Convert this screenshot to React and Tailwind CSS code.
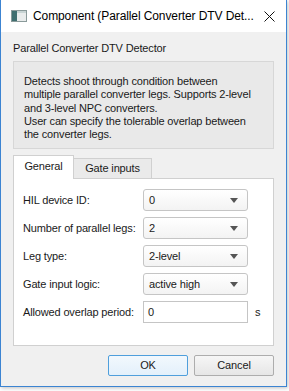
import React from 'react'

const Combo = ({value}) => (
    <div className="w-[105px] h-[22px] border border-[#c5c5c5] rounded-[3px] bg-gradient-to-b from-white to-[#f3f3f3] flex items-center justify-between pl-[5px] pr-[9px]">
        <span>{value}</span>
        <svg width="8" height="5" viewBox="0 0 8 5"><path d="M0 0h8L4 5z" fill="#555" /></svg>
    </div>
)

const Row = ({label, children}) => (
    <div className="flex items-center h-[22px]">
        <div className="w-[120px]">{label}</div>
        {children}
    </div>
)

const App = () => {
    return (
        <div className="w-[289px] h-[391px] bg-white whitespace-nowrap" style={{fontFamily: '"Liberation Sans", Arial, sans-serif'}}>
            <div className="w-[287px] h-[387px] border border-t-0 border-[#3c84d2] shadow-[1px_1px_4px_rgba(0,0,0,0.25)] flex flex-col text-[11px] tracking-[-0.15px] text-[#1a1a1a] leading-[13px]">
                <div className="h-[32px] bg-white flex items-center pl-[10px] pr-[11px] shrink-0">
                    <svg width="16" height="12" viewBox="0 0 16 12">
                        <rect x="0.5" y="0.5" width="15" height="11" fill="#e9ecec" stroke="#8a9a9a" />
                        <rect x="1" y="1" width="5" height="10" fill="#3f6f70" />
                        <rect x="6" y="1" width="9" height="2" fill="#c8d4d4" />
                    </svg>
                    <span className="ml-[6px] text-[12px] tracking-[-0.1px] text-black flex-1">Component (Parallel Converter DTV Det...</span>
                    <svg width="11" height="11" viewBox="0 0 11 11"><path d="M0.5 0.5l10 10M10.5 0.5l-10 10" stroke="#111" strokeWidth="1" /></svg>
                </div>
                <div className="flex-1 bg-[#f0f0f0] px-[12px] flex flex-col">
                    <div className="mt-[10px]">Parallel Converter DTV Detector</div>
                    <div className="mt-[6px] h-[88px] bg-[#e9e9e9] border border-[#d7d7d7] pl-[10px] pt-[13px] leading-[13.3px]">
                        Detects shoot through condition between<br />
                        multiple parallel converter legs. Supports 2-level<br />
                        and 3-level NPC converters.<br />
                        User can specify the tolerable overlap between<br />
                        the converter legs.
                    </div>
                    <div className="mt-[6px] flex items-end h-[24px] relative z-10">
                        <div className="w-[61px] h-[24px] bg-white border border-b-0 border-[#d0d0d0] flex items-center justify-center pb-[2px]">General</div>
                        <div className="w-[78px] h-[21px] bg-[#eaeaea] border border-l-0 border-[#d0d0d0] flex items-center justify-center">Gate inputs</div>
                    </div>
                    <div className="h-[168px] bg-white border border-[#d0d0d0] -mt-[1px] pt-[10px] pl-[9px] flex flex-col gap-[6px]">
                        <Row label="HIL device ID:"><Combo value="0" /></Row>
                        <Row label="Number of parallel legs:"><Combo value="2" /></Row>
                        <Row label="Leg type:"><Combo value="2-level" /></Row>
                        <Row label="Gate input logic:"><Combo value="active high" /></Row>
                        <Row label="Allowed overlap period:">
                            <div className="w-[105px] h-[22px] border border-[#c5c5c5] bg-white flex items-center pl-[4px]">0</div>
                            <span className="ml-[7px]">s</span>
                        </Row>
                    </div>
                    <div className="mt-[9px] flex justify-end gap-[6px]">
                        <div className="w-[80px] h-[21px] border border-[#4f9fdc] rounded-[2px] bg-gradient-to-b from-[#f2f8fd] to-[#e3f0fb] flex items-center justify-center">OK</div>
                        <div className="w-[80px] h-[21px] border border-[#adadad] rounded-[2px] bg-gradient-to-b from-[#f6f6f6] to-[#e6e6e6] flex items-center justify-center">Cancel</div>
                    </div>
                </div>
            </div>
        </div>
    )
}

export default App
